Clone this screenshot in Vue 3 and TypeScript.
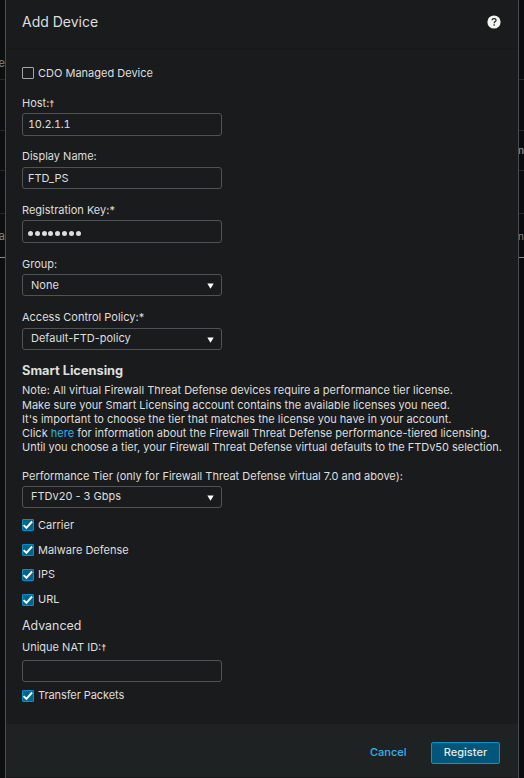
<script setup lang="ts">
import { ref } from 'vue'

interface Field {
  id: string
  label: string
  mark?: string
  kind: 'text' | 'secret' | 'select'
  value: string
}

interface License {
  name: string
  raised: boolean
}

const fields: Field[] = [
  { id: 'host', label: 'Host:', mark: '†', kind: 'text', value: '10.2.1.1' },
  { id: 'display', label: 'Display Name:', kind: 'text', value: 'FTD_PS' },
  { id: 'regkey', label: 'Registration Key:*', kind: 'secret', value: '' },
  { id: 'group', label: 'Group:', kind: 'select', value: 'None' },
  { id: 'policy', label: 'Access Control Policy:*', kind: 'select', value: 'Default-FTD-policy' },
]

const licenses: License[] = [
  { name: 'Carrier', raised: false },
  { name: 'Malware Defense', raised: false },
  { name: 'IPS', raised: true },
  { name: 'URL', raised: true },
]

const secretLength = ref(8)
const tier = ref('FTDv20 - 3 Gbps')
</script>

<template>
  <div class="screen">
    <div class="backdrop">
      <div class="line l1"><span class="left">e</span></div>
      <div class="line l2"></div>
      <div class="line l3"><span class="right bold">n</span></div>
      <div class="line l4"></div>
      <div class="line l5"><span class="left">a</span><span class="right">n</span></div>
    </div>

    <section class="dialog">
      <header class="head">
        <h1>Add Device</h1>
        <svg class="help" viewBox="0 0 14 14">
          <circle cx="7" cy="7" r="6.6" fill="#f4f4f1" />
          <path d="M5 5.3C5.1 4.1 6 3.6 7.1 3.6c1.1 0 2 .6 2 1.6 0 1.4-1.9 1.4-1.9 3" fill="none" stroke="#1a1b1d" stroke-width="1.2" />
          <rect x="6.5" y="9.3" width="1.3" height="1.4" fill="#1a1b1d" />
        </svg>
      </header>

      <div class="body">
        <label class="check cdo"><span class="box"></span><span class="name">CDO Managed Device</span></label>

        <div v-for="f in fields" :key="f.id" class="field" :class="f.id">
          <div class="label">{{ f.label }}<span v-if="f.mark" class="mark">{{ f.mark }}</span></div>
          <div class="control" :class="f.kind">
            <span v-if="f.kind === 'secret'" class="dots"><i v-for="n in secretLength" :key="n"></i></span>
            <span v-else class="value">{{ f.value }}</span>
            <svg v-if="f.kind === 'select'" class="arrow" viewBox="0 0 7 6"><path d="M.3 .4h6.4L3.5 5.8z" fill="#fff" /></svg>
          </div>
        </div>

        <h2>Smart Licensing</h2>
        <div class="note">
          <p class="first">Note: All virtual Firewall Threat Defense devices require a performance tier license.</p>
          <p>Make sure your Smart Licensing account contains the available licenses you need.</p>
          <p>It's important to choose the tier that matches the license you have in your account.</p>
          <p>Click <a>here</a> for information about the Firewall Threat Defense performance-tiered licensing.</p>
          <p class="last">Until you choose a tier, your Firewall Threat Defense virtual defaults to the FTDv50 selection.</p>
        </div>

        <div class="field tier">
          <div class="label">Performance Tier (only for Firewall Threat Defense virtual 7.0 and above):</div>
          <div class="control select">
            <span class="value">{{ tier }}</span>
            <svg class="arrow" viewBox="0 0 7 6"><path d="M.3 .4h6.4L3.5 5.8z" fill="#fff" /></svg>
          </div>
        </div>

        <div class="licenses">
          <label v-for="l in licenses" :key="l.name" class="check" :class="{ raised: l.raised }">
            <span class="box on"><svg viewBox="0 0 12 12"><path d="M1.6 6.1l2.8 2.7 5.7-6.3" /></svg></span>
            <span class="name">{{ l.name }}</span>
          </label>
        </div>

        <h3>Advanced</h3>
        <div class="field nat">
          <div class="label">Unique NAT ID:<span class="mark">†</span></div>
          <div class="control text"></div>
        </div>
        <label class="check raised transfer">
          <span class="box on"><svg viewBox="0 0 12 12"><path d="M1.6 6.1l2.8 2.7 5.7-6.3" /></svg></span>
          <span class="name">Transfer Packets</span>
        </label>
      </div>

      <footer class="foot">
        <button class="cancel">Cancel</button>
        <button class="register">Register</button>
      </footer>
    </section>
  </div>
</template>

<style>
body {
  background: #0b0d0d;
  overflow: hidden;
}
</style>

<style scoped>
* {
  box-sizing: border-box;
}
.screen {
  position: relative;
  width: 524px;
  height: 778px;
  overflow: hidden;
  background: linear-gradient(90deg, #0d0f0e 0 50%, #090b0c 50%);
  font: 11px/14px Inter, "Liberation Sans", sans-serif;
  color: #dedfdd;
}
.line {
  display: flex;
  align-items: flex-end;
  justify-content: space-between;
  border-bottom: 1px solid #25282a;
  color: #858788;
}
.line .left {
  width: 5px;
  display: flex;
  justify-content: flex-end;
}
.line .right {
  width: 6px;
  margin-left: auto;
  font-size: 10px;
}
.line .bold {
  font-weight: 600;
}
.l1 {
  height: 80px;
  padding-bottom: 9px;
}
.l2 {
  height: 51px;
}
.l3 {
  height: 40px;
  padding-bottom: 13px;
}
.l4 {
  height: 43px;
}
.l5 {
  height: 44px;
  padding-bottom: 14px;
  border-bottom-color: #8b8d8d;
}
.dialog {
  position: absolute;
  left: 5px;
  top: 0;
  width: 514px;
  height: 778px;
  border: solid #4b4e50;
  border-width: 0 1px;
  background: #1a1b1d;
  display: flex;
  flex-direction: column;
}
.head {
  height: 49px;
  padding: 13px 17px 0 16px;
  display: flex;
  justify-content: space-between;
  border-bottom: 1px solid #17181a;
}
h1 {
  margin: 0;
  font-size: 14px;
  line-height: 18px;
  font-weight: 400;
}
.help {
  width: 14px;
  height: 14px;
  margin-top: 2.3px;
}
.body {
  flex: 1;
  padding: 17px 16px 0;
  display: flex;
  flex-direction: column;
}
.check {
  display: flex;
  gap: 4px;
  height: 12px;
  line-height: 12px;
}
.check.raised {
  line-height: 10px;
}
.cdo {
  margin: 1px 0 17px;
}
.box {
  width: 12px;
  height: 12px;
  border: 1px solid #a4a6a6;
  border-radius: 1px;
}
.box.on {
  border-color: #0690c9;
  background: #02638c;
}
.box svg {
  display: block;
  width: 12px;
  height: 12px;
  margin: -1px;
}
.box path {
  fill: none;
  stroke: #fff;
  stroke-width: 1.9;
}
.label {
  height: 14px;
  white-space: nowrap;
}
.mark {
  font: 700 9px/10px "Liberation Sans", sans-serif;
}
.control {
  width: 200px;
  height: 22px;
  margin-top: 3px;
  padding: 0 5px;
  border: 1px solid #505355;
  border-radius: 3px;
  display: flex;
  align-items: center;
}
.host {
  margin-bottom: 13px;
}
.host .control,
.regkey .control {
  height: 23px;
}
.host .value {
  padding-bottom: 1px;
  font-variant-numeric: tabular-nums;
  letter-spacing: -0.28px;
}
.display .control,
.policy .control {
  margin-top: 4px;
}
.policy .value,
.tier .value {
  padding-bottom: 2px;
}
.display,
.regkey,
.group {
  margin-bottom: 14px;
}
.select {
  padding: 0 7px 0 8px;
  justify-content: space-between;
}
.arrow {
  width: 7px;
  height: 6px;
  margin-top: 2px;
}
.dots {
  display: flex;
  gap: 1.8px;
  padding-top: 3px;
}
.dots i {
  width: 5px;
  height: 5px;
  border-radius: 50%;
  background: #dedfdd;
}
h2 {
  margin: 13px 0 4px;
  font-size: 12.8px;
  line-height: 16px;
  font-weight: 700;
}
.note p {
  margin: 0;
  height: 14px;
  white-space: nowrap;
}
.note .first {
  height: 15px;
}
.note .last {
  letter-spacing: -0.02px;
}
.note a {
  color: #23b5ec;
}
.tier {
  margin-top: 15px;
}
.licenses {
  margin-top: 11px;
  display: flex;
  flex-direction: column;
  gap: 13px;
}
h3 {
  margin: 12px 0 6px;
  font-size: 12.4px;
  line-height: 16px;
  font-weight: 400;
}
.nat .control {
  margin-top: 6px;
}
.transfer {
  margin-top: 8px;
}
.transfer .name {
  letter-spacing: -0.08px;
}
.foot {
  height: 54px;
  padding: 0 18px 13px;
  display: flex;
  align-items: flex-end;
  justify-content: flex-end;
  gap: 24.5px;
  background: #1f2223;
  border-bottom: 1px solid #1a191c;
}
button {
  height: 22px;
  padding: 0 0 1px;
  border: 0;
  background: none;
  font: 500 11px/19px Inter, "Liberation Sans", sans-serif;
}
.cancel {
  color: #33b4ee;
  padding-bottom: 2px;
}
.register {
  width: 69px;
  border: 1px solid #0795d2;
  border-radius: 2px;
  background: #02567a;
  color: #e8e9e7;
}
</style>
